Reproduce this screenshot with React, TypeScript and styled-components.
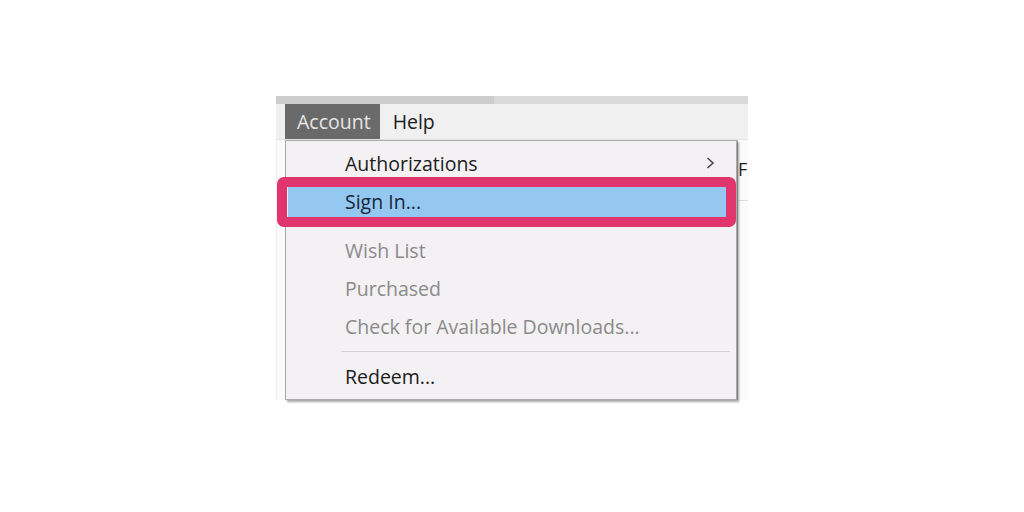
import React from "react";
import styled, { createGlobalStyle } from "styled-components";

const Global = createGlobalStyle`
  html, body { margin: 0; padding: 0; background: #ffffff; }
  body { font-family: "Open Sans", "Noto Sans", sans-serif; }
`;

const Stage = styled.div`
  width: 1024px;
  height: 512px;
  box-sizing: border-box;
  padding: 96px 0 0 276px;
  background: #ffffff;
`;

const Win = styled.div`
  position: relative;
  width: 472px;
`;

const Strip = styled.div`
  display: flex;
  height: 8px;
  background: #dadada;
`;

const StripThumb = styled.div`
  width: 218px;
  background: #cdcdcd;
`;

const MenuBar = styled.div`
  display: flex;
  align-items: stretch;
  height: 36px;
  padding-left: 9px;
  background: #f0f0f0;
  border-bottom: 1px solid #e2e2e2;
  box-sizing: border-box;
`;

const TopItem = styled.div<{ $active?: boolean }>`
  display: flex;
  align-items: center;
  padding: ${(p) => (p.$active ? "0 9px 0 12px" : "0 13px")};
  background: ${(p) => (p.$active ? "#6a6a6a" : "transparent")};
  color: ${(p) => (p.$active ? "#e6e6e6" : "#1c1c1c")};
  font-size: 19.5px;
`;

const Content = styled.div`
  display: flex;
  justify-content: flex-end;
  height: 260px;
  background: #fbfbfb;
  border-left: 1px solid #ececec;
`;

const SideCol = styled.div`
  width: 10px;
  border-left: 2px solid #bdbdbd;
  padding-top: 20px;
  font-size: 18px;
  color: #1c1c1c;
  line-height: 1;
  overflow: hidden;
`;

const SideRule = styled.div`
  margin-top: 22px;
  border-top: 1px solid #dddddd;
`;

const Dropdown = styled.div`
  position: absolute;
  left: 9px;
  top: 44px;
  width: 452px;
  height: 260px;
  box-sizing: border-box;
  padding-top: 3px;
  background: #f3f1f3;
  border: 1px solid #a9a9a9;
  box-shadow: 2px 2px 2px rgba(0, 0, 0, 0.35);
`;

const Row = styled.div<{ $disabled?: boolean; $hot?: boolean }>`
  display: flex;
  align-items: center;
  justify-content: space-between;
  height: 38px;
  margin: 0 3px 0 2px;
  padding: 0 18px 0 57px;
  font-size: 19.5px;
  color: ${(p) => (p.$disabled ? "#8a8a8a" : p.$hot ? "#16263a" : "#1c1c1c")};
  background: ${(p) => (p.$hot ? "#95c8f0" : "transparent")};
`;

const Gap = styled.div<{ $line?: boolean }>`
  height: ${(p) => (p.$line ? "12px" : "11px")};
  display: flex;
  align-items: center;
  padding: 0 6px 0 55px;
  &::after {
    content: "";
    flex: 1;
    border-top: ${(p) => (p.$line ? "1px solid #d2d2d2" : "none")};
  }
`;

const Callout = styled.div`
  position: absolute;
  left: -9px;
  top: 36px;
  width: 459px;
  height: 50px;
  box-sizing: border-box;
  border: 10px solid #e1356d;
  border-radius: 7px;
  pointer-events: none;
`;

const Chevron = () => (
  <svg width="9" height="12" viewBox="0 0 9 12">
    <path d="M1.5 1 L7 6 L1.5 11" fill="none" stroke="#4a4a4a" strokeWidth="1.6" />
  </svg>
);

export default function App() {
  return (
    <>
      <Global />
      <Stage>
        <Win>
          <Strip>
            <StripThumb />
          </Strip>
          <MenuBar>
            <TopItem $active>Account</TopItem>
            <TopItem>Help</TopItem>
          </MenuBar>
          <Content>
            <SideCol>
              F
              <SideRule />
            </SideCol>
          </Content>
          <Dropdown>
            <Row>
              <span>Authorizations</span>
              <Chevron />
            </Row>
            <Row $hot>
              <span>Sign In...</span>
            </Row>
            <Gap />
            <Row $disabled>Wish List</Row>
            <Row $disabled>Purchased</Row>
            <Row $disabled>Check for Available Downloads...</Row>
            <Gap $line />
            <Row>Redeem...</Row>
            <Callout />
          </Dropdown>
        </Win>
      </Stage>
    </>
  );
}
